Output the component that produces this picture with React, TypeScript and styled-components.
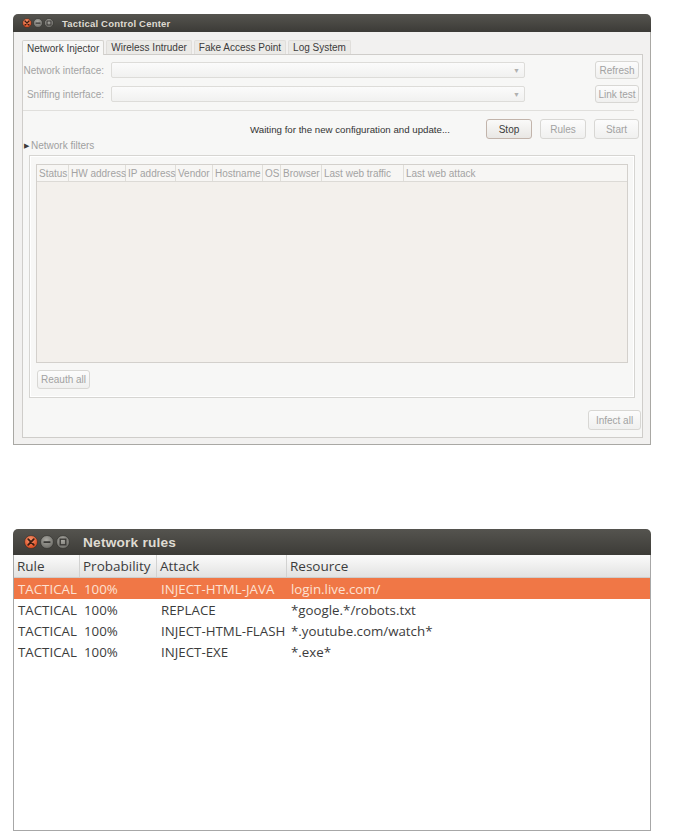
import React from "react";
import styled, { createGlobalStyle, css } from "styled-components";

const GlobalStyle = createGlobalStyle`
  html, body {
    margin: 0;
    padding: 0;
    background: #ffffff;
  }
  body {
    font-family: "Liberation Sans", Arial, sans-serif;
  }
  * {
    box-sizing: border-box;
  }
`;

const Screen = styled.div`
  width: 684px;
  height: 840px;
  padding: 14px 0 0 13px;
  display: flex;
  flex-direction: column;
  gap: 84px;
`;

const Window = styled.div<{ $height: number }>`
  width: 638px;
  height: ${(p) => p.$height}px;
  display: flex;
  flex-direction: column;
`;

const TitleBar = styled.div<{ $height: number; $pad: number }>`
  height: ${(p) => p.$height}px;
  flex: 0 0 auto;
  display: flex;
  align-items: center;
  padding-left: ${(p) => p.$pad}px;
  border-radius: 5px 5px 0 0;
  background: linear-gradient(#55544f, #3c3b37);
`;

const Title = styled.span<{ $size: number; $gap: number }>`
  margin-left: ${(p) => p.$gap}px;
  font-size: ${(p) => p.$size}px;
  font-weight: bold;
  color: #dfdbd2;
  letter-spacing: 0.2px;
`;

/* ---------- window controls ---------- */

interface DotsProps {
  r: number;
  step: number;
}

const WindowDots: React.FC<DotsProps> = ({ r, step }) => {
  const w = r * 2 + step * 2;
  const h = r * 2;
  const c = (i: number) => r + i * step;
  const k = r * 0.4;
  return (
    <svg width={w} height={h} viewBox={`0 0 ${w} ${h}`}>
      <defs>
        <radialGradient id={`close${r}`} cx="45%" cy="35%" r="65%">
          <stop offset="0%" stopColor="#f79a73" />
          <stop offset="100%" stopColor="#d9461c" />
        </radialGradient>
        <radialGradient id={`grey${r}`} cx="45%" cy="35%" r="65%">
          <stop offset="0%" stopColor="#a9a8a2" />
          <stop offset="100%" stopColor="#6e6d68" />
        </radialGradient>
      </defs>
      <circle cx={c(0)} cy={r} r={r - 0.5} fill={`url(#close${r})`} stroke="#2e2d2a" strokeWidth="0.6" />
      <path
        d={`M${c(0) - k} ${r - k} L${c(0) + k} ${r + k} M${c(0) + k} ${r - k} L${c(0) - k} ${r + k}`}
        stroke="#3b1d12"
        strokeWidth={r / 4}
        strokeLinecap="round"
      />
      <circle cx={c(1)} cy={r} r={r - 0.5} fill={`url(#grey${r})`} stroke="#2e2d2a" strokeWidth="0.6" />
      <path d={`M${c(1) - k} ${r} L${c(1) + k} ${r}`} stroke="#3a3936" strokeWidth={r / 4} strokeLinecap="round" />
      <circle cx={c(2)} cy={r} r={r - 0.5} fill={`url(#grey${r})`} stroke="#2e2d2a" strokeWidth="0.6" />
      <rect
        x={c(2) - k}
        y={r - k}
        width={k * 2}
        height={k * 2}
        fill="none"
        stroke="#3a3936"
        strokeWidth={r / 5}
      />
    </svg>
  );
};

/* ---------- control center window ---------- */

const ControlBody = styled.div`
  flex: 1;
  display: flex;
  flex-direction: column;
  background: #f2f1f0;
  border: 1px solid #a9a8a4;
  border-top: none;
  padding: 7px 7px 6px 8px;
  font-size: 10px;
`;

const TabStrip = styled.div`
  height: 15px;
  display: flex;
  align-items: flex-end;
  gap: 2px;
`;

const Tab = styled.div<{ $active?: boolean }>`
  height: ${(p) => (p.$active ? 15 : 14)}px;
  padding: 0 4px;
  display: flex;
  align-items: center;
  color: #3c3c3c;
  border: 1px solid ${(p) => (p.$active ? "#d4d2ce" : "#e0dedb")};
  border-bottom: none;
  border-radius: 2px 2px 0 0;
  background: ${(p) => (p.$active ? "#f7f7f6" : "#ebeae7")};
  margin-bottom: ${(p) => (p.$active ? -1 : 0)}px;
  position: relative;
  z-index: ${(p) => (p.$active ? 1 : 0)};
`;

const Notebook = styled.div`
  flex: 1;
  display: flex;
  flex-direction: column;
  border: 1px solid #cfcdca;
  background: #f7f7f6;
  padding-top: 6px;
`;

const FormRow = styled.div`
  height: 18px;
  display: grid;
  grid-template-columns: 81px 414px 1fr 44px;
  column-gap: 7px;
  align-items: center;
  padding-right: 3px;
  & + & {
    margin-top: 6px;
  }
`;

const FieldLabel = styled.span`
  text-align: right;
  white-space: nowrap;
  color: #a3a3a3;
`;

const Combo = styled.div`
  height: 16px;
  border: 1px solid #dddcd9;
  border-radius: 2px;
  background: linear-gradient(#fbfbfb, #f1f1f0);
  display: flex;
  align-items: center;
  justify-content: flex-end;
  padding-right: 4px;
  color: #b0b0b0;
  font-size: 7px;
`;

const Button = styled.div<{ $width: number; $height: number; $enabled?: boolean }>`
  width: ${(p) => p.$width}px;
  height: ${(p) => p.$height}px;
  flex: 0 0 auto;
  display: flex;
  align-items: center;
  justify-content: center;
  border-radius: 3px;
  border: 1px solid #d8d7d4;
  background: linear-gradient(#fcfcfc, #f0f0ef);
  color: #a2a2a2;
  white-space: nowrap;
  ${(p) =>
    p.$enabled &&
    css`
      border-color: #c2b4ab;
      background: linear-gradient(#fafaf9, #e9e7e4);
      color: #3c3c3c;
    `}
`;

const Rule = styled.div`
  height: 1px;
  margin: 7px 8px 0 0;
  background: #e0dfdc;
`;

const StatusRow = styled.div`
  height: 20px;
  margin-top: 8px;
  display: flex;
  align-items: center;
  justify-content: flex-end;
  gap: 8px;
  padding-right: 3px;
`;

const StatusText = styled.span`
  margin-right: 28px;
  font-size: 9.7px;
  color: #333333;
`;

const Expander = styled.div`
  height: 11px;
  margin-top: 1px;
  display: flex;
  align-items: center;
  gap: 2px;
  padding-left: 1px;
  color: #a0a0a0;
`;

const Arrow = styled.span`
  color: #3c3c3c;
  font-size: 7px;
`;

const Frame = styled.div`
  height: 243px;
  margin: 4px 7px 0 6px;
  border: 1px solid #d6d5d2;
  box-shadow: inset 0 0 0 1px #ffffff;
  padding: 8px 6px 0 6px;
  display: flex;
  flex-direction: column;
`;

const HostTable = styled.div`
  height: 199px;
  border: 1px solid #d3d0cc;
  background: #f3f0ec;
  display: flex;
  flex-direction: column;
`;

const HostHeader = styled.div`
  height: 17px;
  display: flex;
  background: #f7f6f4;
  border-bottom: 1px solid #dcdad6;
`;

const HostColumn = styled.div<{ $width?: number }>`
  ${(p) => (p.$width ? `width: ${p.$width}px;` : "flex: 1;")}
  display: flex;
  align-items: center;
  padding-left: 2px;
  color: #a3a3a3;
  white-space: nowrap;
  border-right: 1px solid #e0ded9;
  &:last-child {
    border-right: none;
  }
`;

const FrameFooter = styled.div`
  margin-top: 7px;
  padding-left: 1px;
`;

const PageFooter = styled.div`
  margin-top: auto;
  margin-bottom: 7px;
  display: flex;
  justify-content: flex-end;
  padding-right: 1px;
`;

const hostColumns: [string, number?][] = [
  ["Status", 32],
  ["HW address", 57],
  ["IP address", 50],
  ["Vendor", 37],
  ["Hostname", 50],
  ["OS", 18],
  ["Browser", 41],
  ["Last web traffic", 82],
  ["Last web attack"],
];

/* ---------- rules window ---------- */

const RulesBody = styled.div`
  flex: 1;
  background: #ffffff;
  border: 1px solid #a7a7a7;
  border-top: none;
  font-family: "Open Sans", "Liberation Sans", sans-serif;
`;

const RulesHeader = styled.div`
  height: 23px;
  display: flex;
  background: linear-gradient(#fbfbfb, #e2e2e1);
  border-bottom: 1px solid #cdcdcc;
`;

const HeaderCell = styled.div<{ $width?: number }>`
  ${(p) => (p.$width ? `width: ${p.$width}px;` : "flex: 1;")}
  display: flex;
  align-items: center;
  padding-left: 3px;
  font-size: 13.5px;
  color: #3c3c3c;
  white-space: nowrap;
  border-right: 1px solid #d2d2d1;
  &:last-child {
    border-right: none;
  }
`;

const RuleRow = styled.div<{ $selected?: boolean }>`
  height: 21px;
  display: flex;
  align-items: center;
  font-size: 13.3px;
  color: ${(p) => (p.$selected ? "#fde1d2" : "#3c3c3c")};
  background: ${(p) => (p.$selected ? "#f07746" : "transparent")};
`;

const RuleCell = styled.div<{ $width?: number }>`
  ${(p) => (p.$width ? `width: ${p.$width}px;` : "flex: 1;")}
  padding-left: 4px;
  white-space: nowrap;
  overflow: hidden;
`;

const ruleColumns = [66, 77, 130];

const rules = [
  ["TACTICAL", "100%", "INJECT-HTML-JAVA", "login.live.com/"],
  ["TACTICAL", "100%", "REPLACE", "*google.*/robots.txt"],
  ["TACTICAL", "100%", "INJECT-HTML-FLASH", "*.youtube.com/watch*"],
  ["TACTICAL", "100%", "INJECT-EXE", "*.exe*"],
];

const App: React.FC = () => {
  return (
    <>
      <GlobalStyle />
      <Screen>
        <Window $height={431}>
          <TitleBar $height={18} $pad={9}>
            <WindowDots r={5} step={11} />
            <Title $size={9.5} $gap={8}>
              Tactical Control Center
            </Title>
          </TitleBar>
          <ControlBody>
            <TabStrip>
              <Tab $active>Network Injector</Tab>
              <Tab>Wireless Intruder</Tab>
              <Tab>Fake Access Point</Tab>
              <Tab>Log System</Tab>
            </TabStrip>
            <Notebook>
              <FormRow>
                <FieldLabel>Network interface:</FieldLabel>
                <Combo>▼</Combo>
                <span />
                <Button $width={44} $height={18}>
                  Refresh
                </Button>
              </FormRow>
              <FormRow>
                <FieldLabel>Sniffing interface:</FieldLabel>
                <Combo>▼</Combo>
                <span />
                <Button $width={44} $height={18}>
                  Link test
                </Button>
              </FormRow>
              <Rule />
              <StatusRow>
                <StatusText>Waiting for the new configuration and update...</StatusText>
                <Button $width={46} $height={20} $enabled>
                  Stop
                </Button>
                <Button $width={46} $height={20}>
                  Rules
                </Button>
                <Button $width={45} $height={20}>
                  Start
                </Button>
              </StatusRow>
              <Expander>
                <Arrow>▶</Arrow>
                Network filters
              </Expander>
              <Frame>
                <HostTable>
                  <HostHeader>
                    {hostColumns.map(([name, width]) => (
                      <HostColumn key={name} $width={width}>
                        {name}
                      </HostColumn>
                    ))}
                  </HostHeader>
                </HostTable>
                <FrameFooter>
                  <Button $width={53} $height={19}>
                    Reauth all
                  </Button>
                </FrameFooter>
              </Frame>
              <PageFooter>
                <Button $width={53} $height={20}>
                  Infect all
                </Button>
              </PageFooter>
            </Notebook>
          </ControlBody>
        </Window>

        <Window $height={302}>
          <TitleBar $height={26} $pad={11}>
            <WindowDots r={7} step={16} />
            <Title $size={13.7} $gap={13}>
              Network rules
            </Title>
          </TitleBar>
          <RulesBody>
            <RulesHeader>
              <HeaderCell $width={ruleColumns[0]}>Rule</HeaderCell>
              <HeaderCell $width={ruleColumns[1]}>Probability</HeaderCell>
              <HeaderCell $width={ruleColumns[2]}>Attack</HeaderCell>
              <HeaderCell>Resource</HeaderCell>
            </RulesHeader>
            {rules.map((r, i) => (
              <RuleRow key={r[3]} $selected={i === 0}>
                <RuleCell $width={ruleColumns[0]}>{r[0]}</RuleCell>
                <RuleCell $width={ruleColumns[1]}>{r[1]}</RuleCell>
                <RuleCell $width={ruleColumns[2]}>{r[2]}</RuleCell>
                <RuleCell>{r[3]}</RuleCell>
              </RuleRow>
            ))}
          </RulesBody>
        </Window>
      </Screen>
    </>
  );
};

export default App;
